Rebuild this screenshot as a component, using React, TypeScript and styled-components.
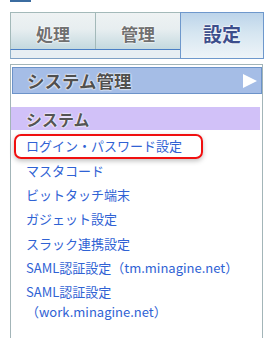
import React from "react";
import styled, { createGlobalStyle } from "styled-components";

const GlobalStyle = createGlobalStyle`
  html, body { margin: 0; padding: 0; background: #fff; }
  body {
    font-family: "Noto Sans CJK JP", "Noto Sans", sans-serif;
    width: 280px;
    height: 338px;
    overflow: hidden;
  }
`;

const Page = styled.div`
  padding-left: 10px;
  width: 280px;
  box-sizing: border-box;
`;

const TopMark = styled.div`
  width: 21px;
  height: 2px;
  background: #3b6ca0;
`;

const TabArea = styled.div`
  margin-top: 10px;
  width: 254px;
  display: grid;
  grid-template-columns: 85px 85px 84px;
  grid-template-rows: 37px 10px;
`;

const Tab = styled.div`
  grid-row: 1;
  box-sizing: border-box;
  border-left: 1px solid #a3b9b9;
  border-top: 1px solid #a3b9b9;
  background: linear-gradient(#eef2f3 0%, #e7eef0 45%, #c4d9df 100%);
  display: flex;
  align-items: center;
  justify-content: center;
  padding-top: 4px;
  font-size: 17px;
  font-weight: 700;
  color: #707070;
  text-shadow: 0 0 2px #fff, 0 0 2px #fff, 0 0 1px #fff;
`;

const ActiveTab = styled.div`
  grid-column: 3;
  grid-row: 1 / 3;
  box-sizing: border-box;
  border: 1px solid #6e98cc;
  background: linear-gradient(#bcd4ea 0%, #d6e6f1 45%, #eef4f8 100%);
  display: flex;
  align-items: center;
  justify-content: center;
  padding-bottom: 4px;
  font-size: 19px;
  font-weight: 700;
  color: #3c4e8c;
  text-shadow: 0 0 2px #fff, 0 0 2px #fff, 0 0 1px #fff;
`;

const Strip = styled.div`
  grid-column: 1 / 3;
  grid-row: 2;
  box-sizing: border-box;
  border-top: 1px solid #4a7fc6;
  border-bottom: 1px solid #7fa0c4;
  border-left: 1px solid #8fb0c8;
  background: #e7eef3;
`;

const Panel = styled.div`
  margin-top: 5px;
  width: 253px;
  box-sizing: border-box;
  border: 1px solid #a3b5b8;
  border-bottom: none;
  padding: 2px 0 0 1px;
`;

const PanelHeader = styled.div`
  height: 27px;
  box-sizing: border-box;
  border: 1px solid #6c93c9;
  background: #a5bde6;
  display: flex;
  align-items: center;
  justify-content: space-between;
  padding: 0 4px 0 14px;
  font-size: 17.5px;
  font-weight: 700;
  color: #505050;
  text-shadow: 0 0 2px #fff, 0 0 2px #fff, 0 0 1px #fff;
`;

const Section = styled.div`
  margin: 13px 2px 0 -1px;
  height: 23px;
  background: #d1c1f8;
  display: flex;
  align-items: center;
  padding-left: 15px;
  font-size: 16px;
  font-weight: 700;
  color: #555;
  text-shadow: 0 0 2px #fff, 0 0 2px #fff, 0 0 1px #fff;
`;

const List = styled.ul`
  list-style: none;
  margin: 0;
  padding: 4px 0 9px 14px;
`;

const Item = styled.li`
  padding: 2.2px 0;
  line-height: 20px;
  font-size: 13px;
  color: #2f62d4;
`;

const Highlighted = styled.span`
  position: relative;
  display: inline-block;
  &::after {
    content: "";
    position: absolute;
    left: -12px;
    right: -21px;
    top: -2px;
    bottom: -3px;
    border: 2px solid #f01010;
    border-radius: 7px;
    box-shadow: 0 2px 5px rgba(0, 0, 0, 0.25);
  }
`;

const Arrow = () => (
  <svg width="15" height="14" viewBox="0 0 15 14">
    <polygon points="1,0 15,7 1,14" fill="#fff" />
  </svg>
);

export default function App() {
  return (
    <>
      <GlobalStyle />
      <Page>
        <TopMark />
        <TabArea>
          <Tab>処理</Tab>
          <Tab>管理</Tab>
          <ActiveTab>設定</ActiveTab>
          <Strip />
        </TabArea>
        <Panel>
          <PanelHeader>
            <span>システム管理</span>
            <Arrow />
          </PanelHeader>
          <Section>システム</Section>
          <List>
            <Item>
              <Highlighted>ログイン・パスワード設定</Highlighted>
            </Item>
            <Item>マスタコード</Item>
            <Item>ビットタッチ端末</Item>
            <Item>ガジェット設定</Item>
            <Item>スラック連携設定</Item>
            <Item>SAML認証設定（tm.minagine.net）</Item>
            <Item>
              SAML認証設定
              <br />
              （work.minagine.net）
            </Item>
          </List>
          <Section />
        </Panel>
      </Page>
    </>
  );
}
